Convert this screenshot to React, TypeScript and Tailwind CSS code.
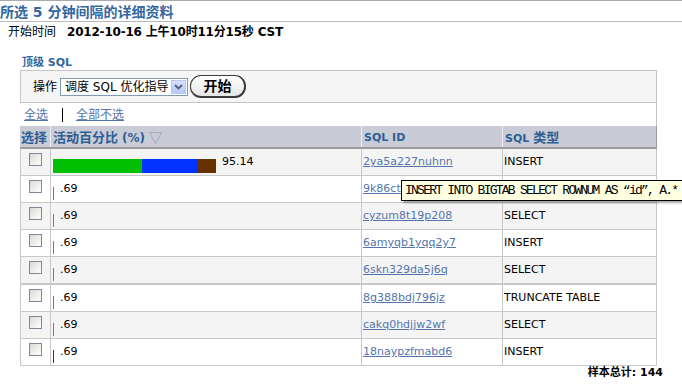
import React from "react";

type Row = { pct: string; id: string; type: string; big?: boolean; line?: string; thick?: boolean };

const rows: Row[] = [
  { pct: "95.14", id: "2ya5a227nuhnn", type: "INSERT", big: true },
  { pct: ".69", id: "9k86ctq3zyqsv", type: "INSERT", line: "bg-[#16c016]" },
  { pct: ".69", id: "cyzum8t19p208", type: "SELECT", line: "bg-[#16c016]" },
  { pct: ".69", id: "6amyqb1yqq2y7", type: "INSERT", line: "bg-[#16c016]" },
  { pct: ".69", id: "6skn329da5j6q", type: "SELECT", line: "bg-[#16c016]", thick: true },
  { pct: ".69", id: "8g388bdj796jz", type: "TRUNCATE TABLE", line: "bg-[#16c016]" },
  { pct: ".69", id: "cakq0hdjjw2wf", type: "SELECT", line: "bg-[#16c016]" },
  { pct: ".69", id: "18naypzfmabd6", type: "INSERT", line: "bg-[#2a2a9a]" },
];

function Checkbox() {
  return (
    <div className="w-[13px] h-[13px] border border-[#7d8898] bg-gradient-to-br from-[#d9d9d4] to-white" />
  );
}

export default function App() {
  return (
    <div className="w-[682px] h-[385px] overflow-hidden bg-white relative font-['DejaVu_Sans','Noto_Sans_CJK_SC',sans-serif] text-black">
      <div className="h-px bg-[#a9a9a9]" />
      <div className="h-[20px] pt-[2px] leading-[18px] text-[14px] font-bold text-[#32679f] whitespace-nowrap">
        所选 5 分钟间隔的详细资料
      </div>
      <div className="h-px bg-[#b9b9b9]" />
      <div className="h-[18px] pt-[3px] pl-[8px] flex items-start whitespace-nowrap text-[12px] leading-[15px]">
        <span>开始时间</span>
        <span className="ml-[11px] font-bold tracking-[-0.2px]">2012-10-16 上午10时11分15秒 CST</span>
      </div>
      <div className="mt-[16px] h-[14px] pl-[22px] text-[11px] leading-[14px] font-bold text-[#32679f] whitespace-nowrap">
        顶级 SQL
      </div>

      <div className="ml-[20px] w-[637px]">
        {/* toolbar */}
        <div className="h-[33px] border border-[#c4c4c4] bg-[#f5f5f5] flex items-center pl-[12px] text-[12px]">
          <span className="leading-[14px]">操作</span>
          <div className="ml-[3px] w-[128px] h-[18px] border border-[#7f9db9] bg-white flex items-center">
            <span className="pl-[4px] flex-1 text-[12px] leading-[14px] whitespace-nowrap">调度 SQL 优化指导</span>
            <div className="w-[15px] h-[14px] mr-px bg-gradient-to-b from-[#d6e2fd] to-[#b4c9f6] border border-[#b8c8ea] flex items-center justify-center">
              <svg width="9" height="6" viewBox="0 0 9 6">
                <path d="M1 1 L4.5 4.5 L8 1" stroke="#4d6185" strokeWidth="1.8" fill="none" />
              </svg>
            </div>
          </div>
          <div className="ml-[2px] w-[56px] h-[23px] rounded-[11px] border border-[#3b3b3b] border-b-2 border-r-2 bg-gradient-to-b from-white to-[#e6e6e6] flex items-center justify-center text-[14px] font-bold leading-[16px]">
            开始
          </div>
        </div>
        {/* links */}
        <div className="h-[23px] border-r border-[#c4c4c4] flex items-center pl-[4px] text-[12px] leading-[14px] text-[#5474ad]">
          <span className="underline">全选</span>
          <div className="ml-[14px] w-px h-[14px] bg-black" />
          <span className="ml-[13px] underline">全部不选</span>
        </div>
        {/* header */}
        <div className="h-[23px] bg-[#c9ccd6] border-b-2 border-[#9a9a9a] flex text-[11px] font-bold text-[#2d5e95] leading-[14px] whitespace-nowrap">
          <div className="w-[31px] border-r border-[#eceef2] pl-[1px] pt-[5px]">
            <span className="text-[13px]">选择</span>
          </div>
          <div className="w-[311px] border-r border-[#eceef2] pl-[2px] pt-[5px] flex items-start">
            <span className="text-[13px]">活动百分比</span>
            <span className="ml-[4px] text-[12px]">(%)</span>
            <svg className="ml-[4px] mt-[1px]" width="13" height="12" viewBox="0 0 13 12">
              <path d="M0.5 0.5 L12.5 0.5 L6.5 11.5 Z" stroke="#a7abb8" strokeWidth="1" fill="none" />
            </svg>
          </div>
          <div className="w-[141px] border-r border-[#eceef2] pl-[2px] pt-[5px]">SQL ID</div>
          <div className="w-[154px] border-r border-[#9a9a9a] pl-[2px] pt-[5px]">
            SQL <span className="text-[13px]">类型</span>
          </div>
        </div>
        {/* rows */}
        {rows.map((r, i) => (
          <div
            key={i}
            className={`h-[27px] flex border-l border-[#c8c8c8] ${r.thick ? "border-b-2 h-[28px]" : "border-b"} ${
              i % 2 === 0 ? "bg-[#f4f4f4]" : "bg-white"
            } text-[11px] leading-[14px] whitespace-nowrap`}
          >
            <div className="w-[30px] border-r border-[#c8c8c8] pl-[8px] pt-[4px]">
              <Checkbox />
            </div>
            <div className="w-[311px] border-r border-[#c8c8c8] pl-[2px] flex items-start">
              {r.big ? (
                <div className="mt-[10px] h-[14px] flex">
                  <div className="w-[89px] bg-[#00c000]" />
                  <div className="w-[55px] bg-[#0033ff]" />
                  <div className="w-[19px] bg-[#663300]" />
                </div>
              ) : (
                <div className={`mt-[11px] w-px h-[13px] ${r.line}`} />
              )}
              <span className="ml-[6px] mt-[6px]">{r.pct}</span>
            </div>
            <div className="w-[141px] border-r border-[#c8c8c8] pl-[1px] pt-[6px]">
              <span className="underline text-[#5474ad]">{r.id}</span>
            </div>
            <div className="w-[154px] border-r border-[#c8c8c8] pl-[1px] pt-[6px]">{r.type}</div>
          </div>
        ))}
      </div>

      <div className="w-[663px] flex justify-end text-[11px] leading-[13px] font-bold whitespace-nowrap">
        样本总计: 144
      </div>

      {/* tooltip */}
      <div className="absolute left-[401px] top-[180px] h-[21px] w-[300px] border border-black bg-[#ffffe1] pl-[3px] shadow-[2px_2px_2px_rgba(0,0,0,0.35)] flex items-center">
        <span className="font-['Liberation_Mono','Courier_New',monospace] text-[13px] tracking-[-1.75px] leading-[16px] whitespace-nowrap">
          INSERT INTO BIGTAB SELECT ROWNUM AS “id”, A.* FROM
        </span>
      </div>
    </div>
  );
}
